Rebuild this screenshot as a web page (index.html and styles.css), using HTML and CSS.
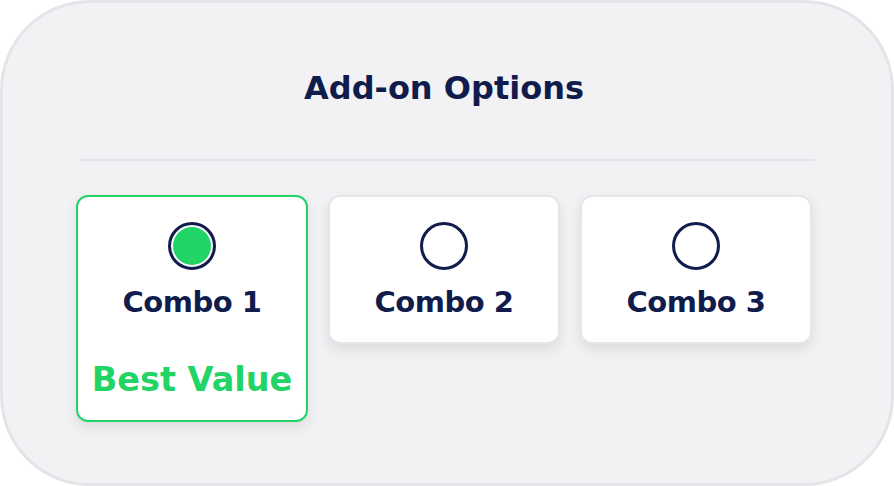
FILE: index.html
```html
<!DOCTYPE html>
<html>
<head>
<meta charset="utf-8">
<link rel="stylesheet" href="styles.css">
</head>
<body>
<div class="panel">
  <h1 class="title">Add-on Options</h1>
  <div class="divider"></div>
  <div class="options">
    <div class="card card-selected">
      <span class="radio radio-on"><span class="dot"></span></span>
      <span class="label">Combo 1</span>
      <span class="badge">Best Value</span>
    </div>
    <div class="card">
      <span class="radio"></span>
      <span class="label">Combo 2</span>
    </div>
    <div class="card">
      <span class="radio"></span>
      <span class="label">Combo 3</span>
    </div>
  </div>
</div>
</body>
</html>
```
FILE: styles.css
```css
* { box-sizing: border-box; }
html, body { margin: 0; padding: 0; background: #ffffff; }
body { font-family: "DejaVu Sans", "Open Sans", sans-serif; }
.panel {
  width: 894px;
  height: 486px;
  border: 3px solid #e5e4e9;
  border-radius: 90px;
  background: #f2f1f4;
  padding: 67px 79px 0 73px;
}
.title {
  margin: 0;
  text-align: center;
  font-size: 32px;
  line-height: 36px;
  font-weight: 700;
  color: #101c4b;
}
.divider {
  height: 2px;
  margin: 53px -2px 0 2px;
  background: #e5e4e9;
}
.options {
  margin-top: 34px;
  display: grid;
  grid-template-columns: repeat(3, 1fr);
  column-gap: 20px;
  align-items: start;
}
.card {
  background: #ffffff;
  border: 2px solid #e6e5ea;
  border-radius: 12px;
  box-shadow: 0 6px 14px rgba(0, 0, 0, 0.09);
  display: flex;
  flex-direction: column;
  align-items: center;
  padding: 25px 0 22px;
}
.card-selected { border-color: #22d366; }
.radio {
  width: 48px;
  height: 48px;
  border: 3px solid #101c4b;
  border-radius: 50%;
  display: flex;
  align-items: center;
  justify-content: center;
}
.dot {
  width: 38px;
  height: 38px;
  border-radius: 50%;
  background: #22d366;
}
.label {
  margin-top: 14px;
  font-size: 29px;
  line-height: 36px;
  font-weight: 700;
  letter-spacing: -0.5px;
  color: #101c4b;
}
.badge {
  margin-top: 42px;
  font-size: 33.5px;
  line-height: 36px;
  font-weight: 700;
  color: #22d366;
}
```
